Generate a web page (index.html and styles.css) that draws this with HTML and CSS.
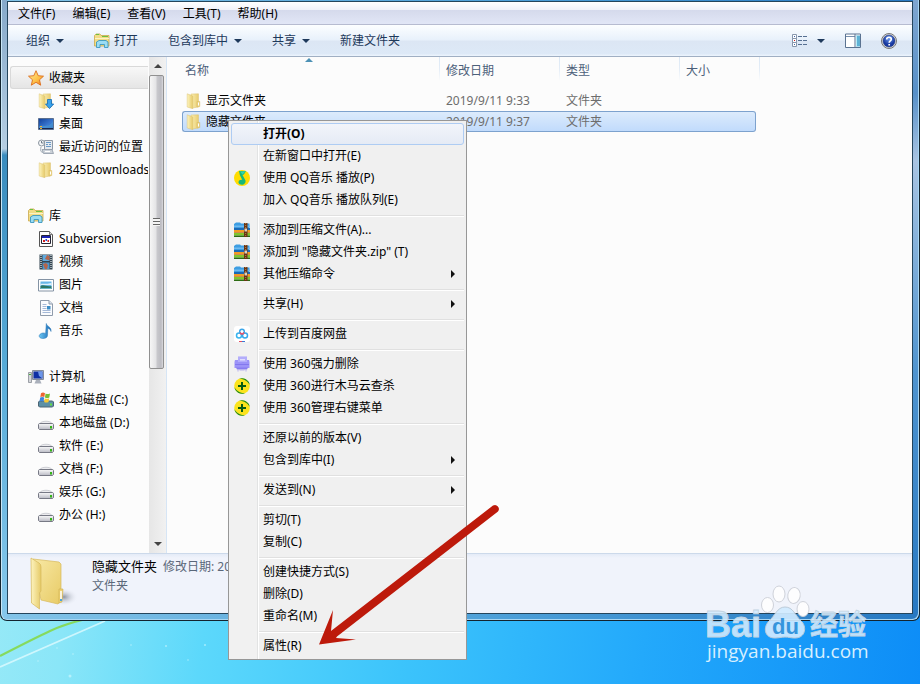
FILE: index.html
```
<!DOCTYPE html>
<html lang="zh-CN">
<head>
<meta charset="utf-8">
<title>隐藏文件夹</title>
<link rel="stylesheet" href="styles.css">
</head>
<body>
<svg class="defs" aria-hidden="true">
  <defs>
    <linearGradient id="gold" x1="0" x2="1"><stop offset="0" stop-color="#fbf0b4"/><stop offset="1" stop-color="#e8cc70"/></linearGradient>
    <linearGradient id="goldBig" x1="0" x2="1" y2="1"><stop offset="0" stop-color="#f8e9a6"/><stop offset="1" stop-color="#e8cb66"/></linearGradient>
    <linearGradient id="goldFlap" x1="0" x2="1"><stop offset="0" stop-color="#fdf4bf"/><stop offset="1" stop-color="#e6ca68"/></linearGradient>
    <linearGradient id="starFill" x1="0" y1="0" x2="1" y2="1"><stop offset="0" stop-color="#fff0a0"/><stop offset=".6" stop-color="#fdbf45"/><stop offset="1" stop-color="#f0701c"/></linearGradient>
    <linearGradient id="screen" x2="1" y2="1"><stop offset="0" stop-color="#123f98"/><stop offset=".6" stop-color="#3a78d0"/><stop offset="1" stop-color="#1c4aa0"/></linearGradient>
    <linearGradient id="note" x2="1"><stop offset="0" stop-color="#6cc6f2"/><stop offset="1" stop-color="#1667b4"/></linearGradient>
    <linearGradient id="drive" y2="1" x2="0"><stop offset="0" stop-color="#fafafa"/><stop offset="1" stop-color="#b9bac4"/></linearGradient>
    <radialGradient id="helpFill" cy=".3"><stop offset="0" stop-color="#6d9cf0"/><stop offset="1" stop-color="#1838a0"/></radialGradient>
    <radialGradient id="shadow"><stop offset="0" stop-color="#8f96a2"/><stop offset="1" stop-color="#f0f3fb" stop-opacity="0"/></radialGradient>
  </defs>
  <symbol id="folder" viewBox="0 0 16 16">
    <path d="M5 1 12.500.8 12.500 14 6 15z" fill="url(#gold)" stroke="#dcc273" stroke-width=".5"/>
    <path d="M1.200.8 6.800 3 6.800 15.700 1.200 14z" fill="url(#goldFlap)" stroke="#dcc273" stroke-width=".5"/>
    <path d="M11 8.500h2.800v5l-2.800.5z" fill="#ecd27c" stroke="#d2b356" stroke-width=".4"/>
    <path d="M12.500 9.500v3" stroke="#fff"/>
  </symbol>
  <symbol id="download" viewBox="0 0 16 16">
    <use href="#folder"/>
    <path d="M9.500 6.500h4v4.500h2.200L11.500 15.600 7.500 11h2z" fill="#39a2ec" stroke="#1269b4" stroke-width=".8"/>
  </symbol>
  <symbol id="library" viewBox="0 0 16 16">
    <path d="M.5 13V2.500L2 1h4l1 1.500h8v10.500z" fill="#f2dc86" stroke="#c9aa4c" stroke-width=".8"/>
    <path d="M2 1.500h3M8 3.500h6" stroke="#6cc23e"/>
    <path d="M1 5.500h14" stroke="#fbf3c4"/>
    <path d="M2.500 14.500V9L5 7.500h7l2 1.500v5.500h-3.500v-3h-4.500v3z" fill="#9adcf4" stroke="#3c97bf" stroke-width=".9"/>
  </symbol>
  <symbol id="star" viewBox="0 0 16 16">
    <path d="M8 .7 10.200 5.700 15.500 6.200 11.500 9.800 12.700 15.200 8 12.300 3.300 15.200 4.500 9.800.5 6.200 5.800 5.700z" fill="url(#starFill)" stroke="#dc6d1b" stroke-width=".9"/>
  </symbol>
  <symbol id="desktop" viewBox="0 0 16 16">
    <path d="M.5 2.500h15v11h-15z" fill="url(#screen)" stroke="#5a6f90"/>
    <path d="M1 10.500c4-2 9 2 14-5v7H1z" fill="#4a98d4" opacity=".7"/>
    <path d="M1 12.500h14" stroke="#17264f"/><path d="M2 10.500h2M2 12.500h2" stroke="#f2b832" stroke-width="1.200"/>
  </symbol>
  <symbol id="recent" viewBox="0 0 16 16">
    <path d="M6.500 1.500h8v9h-8z" fill="#e5e9ee" stroke="#8d98a6"/>
    <path d="M8 3.500h5M8 5.500h2M11 5.500h2M8 7.500h5" stroke="#6899c8"/>
    <path d="M4 10.500h10l1.500 4h-10z" fill="#cbd1d8" stroke="#8d98a6" stroke-width=".8"/>
    <path d="M7 12.500h5" stroke="#fff"/>
    <circle cx="3.500" cy="4" r="3" fill="#f4f6f8" stroke="#8a949e"/><path d="M3.500 2v2h2" fill="none" stroke="#50606f" stroke-width=".8"/>
    <path d="M3 8c-1 4 0 5 2 5.500" stroke="#9aa6b2" fill="none"/>
  </symbol>
  <symbol id="svn" viewBox="0 0 16 16">
    <path d="M1.500.5h10l3 3v12h-13z" fill="#fdfdfd" stroke="#555"/>
    <path d="M11.500.5v3h3" fill="#ddd" stroke="#777"/>
    <path d="M3.500 4.500h9v8h-9z" fill="#fff" stroke="#223"/><path d="M4 6h8" stroke="#1b22b5" stroke-width="2"/>
    <path d="M5 9h2v2H5z" fill="#d32020"/><path d="M7.500 8h1.500v2H7.500z" fill="#2048d8"/><path d="M9.500 9h1.500v2H9.500z" fill="#d32020"/>
  </symbol>
  <symbol id="film" viewBox="0 0 16 16">
    <path d="M1.500.5h13v15h-13z" fill="#334450"/><path d="M4.500 1h7v6h-7z" fill="#5fa9dc"/><path d="M4.500 8.500h7v6.500h-7z" fill="#4c97cc"/>
    <path d="M9 1l2.500 1v4.500L7 5zM5 10l3-1 2 2-1 4H7z" fill="#b4654b"/>
    <path d="M3 1v14M13 1v14" stroke="#e6edf0" stroke-width="1.200" stroke-dasharray="1 1"/>
  </symbol>
  <symbol id="picture" viewBox="0 0 16 16">
    <path d="M.5 2.500h15v11.500H.5z" fill="#fff" stroke="#8493a4"/><path d="M2.500 4.500h11v7.500h-11z" fill="#67b7e8"/>
    <path d="M2.500 7c3-1 6 .5 11-1v2h-11z" fill="#dff1fa"/><path d="M2.500 9c3-2 6 1 11 0v3h-11z" fill="#2c7765"/><path d="M3 11.500h10" stroke="#67b7c9"/>
  </symbol>
  <symbol id="document" viewBox="0 0 16 16">
    <path d="M2.500.5h8.500L14.500 4v11.500h-12z" fill="#fbfcfe" stroke="#8f9bab"/><path d="M11 .5V4h3.500" fill="#dbe3ee" stroke="#8f9bab"/>
    <path d="M4.500 4.500h4M4.500 6.500h4M4.500 8.500h4M4.500 10.500h8M4.500 12.500h8" stroke="#a5b9d8"/><path d="M9 6h3.500v3.500H9z" fill="#3b8dc6"/>
  </symbol>
  <symbol id="music" viewBox="0 0 16 16">
    <path d="M8.300.5c.5 3 5.500 3.500 4.700 8-.5-1.800-1.700-3-3.200-3.300L9.500 12.500c0 2-2.300 3.200-5 3-3-.2-4.300-2.500-2.500-4.200 1.600-1.500 4-1.700 5.600-.8z" fill="url(#note)" stroke="#2675b5" stroke-width=".5"/>
  </symbol>
  <symbol id="computer" viewBox="0 0 16 16">
    <path d="M.5 3.500h3v10h-3z" fill="#d4d6da" stroke="#888d96" stroke-width=".8"/><path d="M1 5.500h2" stroke="#45b035"/>
    <path d="M4.500 1.500h11v9h-11z" fill="#c2c7d0" stroke="#848c9a"/><path d="M5.500 2.500h9v7h-9z" fill="#0d2fa4"/><path d="M10 2.500h4.500v7L11 7z" fill="#6d96e8"/>
    <path d="M8 11h4l1.500 3.500h-7z" fill="#aab0bb"/>
  </symbol>
  <symbol id="drive-icon" viewBox="0 0 16 16">
    <path d="M2 8.500C3 5.500 13 5.500 14 8.500l1.500.5H.5z" fill="#ededf0" stroke="#b4b5bd" stroke-width=".6"/>
    <path d="M1.500 8.500h13l1 1v4l-1 1h-13l-1-1v-4z" fill="url(#drive)" stroke="#777985"/><path d="M12 11h2v2.500h-2z" fill="#34b516"/>
  </symbol>
  <symbol id="system" viewBox="0 0 16 16">
    <path d="M1.500 9h13l1 1v4l-1 1h-13l-1-1v-4z" fill="#5c90a6" stroke="#4d6474"/><path d="M12 11.500h2v2h-2z" fill="#62df3f"/>
    <path d="M3 1.200q2-1.500 4 0L6.300 5q-2-1-4 0z" fill="#ee6430"/><path d="M7.600 1.500q2 1 4.400 0L11.300 5.500q-2 1-4.400 0z" fill="#79bf35"/><path d="M2.200 5.500q2-1 4 0L5.500 9.500q-2-1-4 0z" fill="#3d86dd"/><path d="M6.800 6.200q2 1 4.400 0L10.500 10q-2 1-4.400 0z" fill="#f9c832"/>
  </symbol>
  <symbol id="network" viewBox="0 0 16 16"><circle cx="6" cy="6" r="6" fill="#2d68b8"/></symbol>
  <symbol id="qq" viewBox="0 0 16 16">
    <circle cx="8" cy="8" r="8" fill="#ffdc00"/><path d="M5 1 12 1.200 9.800 4.500 8.500 5 11.500 10.500C12 13 10 14.800 8 14.800S4.200 13.500 4.500 12c.3-1.800 2-2.600 3.800-2.100L5.800 5z" fill="#18b979"/><path d="M6 1.500 11.500 1.500 8.500 4.500z" fill="#37d3b0"/>
  </symbol>
  <symbol id="zip" viewBox="0 0 16 16">
    <path d="M0 2 2 .5h4l1 1h8.500V7H0z" fill="#3d9de2"/><path d="M0 3.500h16v1.500H0z" fill="#6fbaf0"/><path d="M0 6h16v2H0z" fill="#1b69b5"/>
    <path d="M0 8h16v2.500H0z" fill="#f39a24"/><path d="M0 10.500h16v.8H0z" fill="#a9550c"/><path d="M0 11h16v2.500H0z" fill="#7fc62c"/><path d="M0 13.500h16V15H0z" fill="#2d6c13"/>
    <path d="M10 1h3.500v14H10z" fill="#683515"/><path d="M10.500 6.500h2.500v3h-2.500z" fill="#ddd1c0"/><path d="M11.700 1v5M11.700 11v4" stroke="#bd824b" stroke-dasharray="1 1"/>
  </symbol>
  <symbol id="pan" viewBox="0 0 16 16">
    <rect width="16" height="16" rx="3" fill="#fff"/><g fill="none" stroke-width="1.500"><circle cx="5" cy="9.500" r="2.500" stroke="#37b4ef"/><circle cx="11" cy="9.500" r="2.500" stroke="#37a8ed"/><circle cx="8" cy="5.600" r="2.300" stroke="#3ba6e9"/><path d="M6 6.500Q8 9.500 10 6.500" stroke="#ee5266"/></g><path d="M5 15.500h3" stroke="#e64b5e"/><path d="M8 15.500h3" stroke="#397ad8"/>
  </symbol>
  <symbol id="shred" viewBox="0 0 16 16">
    <path d="M4 .5h9v5H4z" fill="#aaa3fa"/><path d="M6 2.500h5v2H6z" fill="#d9d6ff"/><path d="M1 4h14l.5 2v6h-15V6z" fill="#9c93f8"/><path d="M4 1h9v5H4z" fill="#b3adfb"/><path d="M6 3h5v1.500H6z" fill="#e0ddff"/><path d="M1 8.500h14" stroke="#8378ee"/><path d="M2 11.500h12l-1 2H3z" fill="#877cf0"/><path d="M4 14v1.500M12 14v1.500M5.500 14h5" stroke="#b7b1ee"/>
  </symbol>
  <symbol id="safe" viewBox="0 0 16 16">
    <circle cx="8" cy="8" r="7.800" fill="#fbe31d"/><path d="M5 .8A8 8 0 0 1 15.800 7L14 4.500Q11 1 5 .8zM11 15.200A8 8 0 0 1 .2 9L2 11.500Q5 15 11 15.200z" fill="#178a22"/><path d="M8 4v8M4 8h8" stroke="#075b13" stroke-width="2"/>
  </symbol>
  <symbol id="views" viewBox="0 0 16 14">
    <g fill="#fff" stroke="#8796ac"><path d="M.5.5h4v4h-4zM.5 4.500h4v4h-4zM.5 8.500h4v4h-4z"/></g>
    <path d="M6 2.500h4M11 2.500h4M6 6.500h4M11 6.500h4M6 10.500h4M11 10.500h4" stroke="#566f91"/>
    <path d="M2 2h1v1H2zM2 10h1v1H2z" fill="#3a66ad"/><path d="M2 6h1v1H2z" fill="#d31818"/>
  </symbol>
  <symbol id="preview" viewBox="0 0 16 15">
    <path d="M.5.500h15v13.500H.5z" fill="#fff" stroke="#5b7391"/><path d="M1 3h9" stroke="#7890ad"/><path d="M10 .5V14" stroke="#5b7391"/><path d="M11 2h4v11h-4z" fill="#5fb2d5"/><path d="M11.500 2v11" stroke="#b6ecf8"/>
  </symbol>
  <symbol id="help" viewBox="0 0 16 16">
    <circle cx="8" cy="8" r="7.500" fill="#e0e0e0" stroke="#777"/><circle cx="8" cy="8" r="6" fill="url(#helpFill)" stroke="#293c78" stroke-width=".6"/>
    <path d="M5.700 6.500C5.700 3.500 10.500 3.600 10.300 6.300 10.200 8 8.200 8 8.200 9.800M8.200 11v1.600" fill="none" stroke="#fff" stroke-width="1.700"/>
  </symbol>
</svg>

<div class="desktop">
  <svg class="wallpaper" viewBox="0 0 240 64" aria-hidden="true">
    <path d="M0 36Q35 18 50 11T86-1" fill="none" stroke="#86da5d" stroke-width="2.200"/>
    <path d="M0 47 105 1" stroke="#dffbff" stroke-width="1.800" opacity=".8"/>
    <g fill="#d5faff" opacity=".6"><circle cx="57" cy="28" r=".8"/><circle cx="73" cy="34" r=".8"/><circle cx="131" cy="25" r=".8"/><circle cx="166" cy="26" r="1"/><circle cx="205" cy="25" r="1"/><circle cx="70" cy="56" r="1.500"/><circle cx="38" cy="41" r=".8"/><circle cx="188" cy="40" r=".8"/></g>
  </svg>

  <main class="window">
    <div class="client">
      <nav class="menubar">
        <button>文件(F)</button><button>编辑(E)</button><button>查看(V)</button><button>工具(T)</button><button>帮助(H)</button>
      </nav>
      <div class="toolbar">
        <button>组织<i class="caret"></i></button>
        <button class="with-icon"><svg class="icon"><use href="#library"/></svg>打开</button>
        <button>包含到库中<i class="caret"></i></button>
        <button>共享<i class="caret"></i></button>
        <button>新建文件夹</button>
        <div class="tools">
          <button class="view" aria-label="视图"><svg class="icon"><use href="#views"/></svg><i class="caret"></i></button>
          <button aria-label="预览窗格"><svg class="icon"><use href="#preview"/></svg></button>
          <button aria-label="帮助"><svg class="icon"><use href="#help"/></svg></button>
        </div>
      </div>

      <div class="content">
        <aside class="sidebar">
          <div class="tree">
            <ul>
              <li class="head current"><svg class="icon"><use href="#star"/></svg>收藏夹</li>
              <li><svg class="icon"><use href="#download"/></svg>下载</li>
              <li><svg class="icon"><use href="#desktop"/></svg>桌面</li>
              <li><svg class="icon"><use href="#recent"/></svg>最近访问的位置</li>
              <li><svg class="icon"><use href="#folder"/></svg>2345Downloads</li>
            </ul>
            <ul>
              <li class="head"><svg class="icon"><use href="#library"/></svg>库</li>
              <li><svg class="icon"><use href="#svn"/></svg>Subversion</li>
              <li><svg class="icon"><use href="#film"/></svg>视频</li>
              <li><svg class="icon"><use href="#picture"/></svg>图片</li>
              <li><svg class="icon"><use href="#document"/></svg>文档</li>
              <li><svg class="icon"><use href="#music"/></svg>音乐</li>
            </ul>
            <ul>
              <li class="head"><svg class="icon"><use href="#computer"/></svg>计算机</li>
              <li><svg class="icon"><use href="#system"/></svg>本地磁盘 (C:)</li>
              <li><svg class="icon"><use href="#drive-icon"/></svg>本地磁盘 (D:)</li>
              <li><svg class="icon"><use href="#drive-icon"/></svg>软件 (E:)</li>
              <li><svg class="icon"><use href="#drive-icon"/></svg>文档 (F:)</li>
              <li><svg class="icon"><use href="#drive-icon"/></svg>娱乐 (G:)</li>
              <li><svg class="icon"><use href="#drive-icon"/></svg>办公 (H:)</li>
            </ul>
            <ul><li class="head"><svg class="icon"><use href="#network"/></svg></li></ul>
          </div>
          <div class="scrollbar">
            <button class="up" aria-label="向上滚动"></button>
            <div class="track"><div class="thumb"></div></div>
            <button class="down" aria-label="向下滚动"></button>
          </div>
        </aside>

        <section class="files">
          <table>
            <colgroup><col class="c-name"><col class="c-mid"><col class="c-mid"><col class="c-size"><col class="c-end"></colgroup>
            <thead>
              <tr><th class="sorted">名称</th><th>修改日期</th><th>类型</th><th colspan="2">大小</th></tr>
            </thead>
            <tbody>
              <tr><td><span class="file"><svg class="icon"><use href="#folder"/></svg>显示文件夹</span></td><td>2019/9/11 9:33</td><td>文件夹</td><td></td></tr>
              <tr class="selected"><td><span class="file"><svg class="icon"><use href="#folder"/></svg>隐藏文件夹</span></td><td>2019/9/11 9:37</td><td>文件夹</td><td></td></tr>
            </tbody>
          </table>
        </section>
      </div>

      <footer class="details">
        <svg class="big-folder" viewBox="0 0 48 54" aria-hidden="true">
          <ellipse cx="34" cy="40" rx="14" ry="9" fill="url(#shadow)"/>
          <path d="M3 2 29 5 31 7 31 44 28 47 11 43z" fill="url(#goldBig)" stroke="#d7b95c" stroke-width=".7"/>
          <path d="M1 1 9 6Q11 7 11 10V34L9.500 36 9.500 52 1.500 46z" fill="url(#goldFlap)" stroke="#d6b85a" stroke-width=".7"/>
          <path d="M29 32h4l-1 13-3 1z" fill="#eed274" stroke="#cfae4e" stroke-width=".6"/><path d="M31 34v9" stroke="#fff" stroke-width="1.500"/><path d="M30 42h2v2h-2z" fill="#4ba5dc"/>
        </svg>
        <div class="info">
          <div><span class="title">隐藏文件夹</span><span>修改日期: 2019/9/11 9:37</span></div>
          <div>文件夹</div>
        </div>
      </footer>
    </div>
  </main>

  <div class="context-menu" role="menu">
    <button class="hot" role="menuitem">打开(O)</button>
    <button role="menuitem">在新窗口中打开(E)</button>
    <button role="menuitem"><svg class="icon"><use href="#qq"/></svg>使用 QQ音乐 播放(P)</button>
    <button role="menuitem">加入 QQ音乐 播放队列(E)</button>
    <hr>
    <button role="menuitem"><svg class="icon"><use href="#zip"/></svg>添加到压缩文件(A)...</button>
    <button role="menuitem"><svg class="icon"><use href="#zip"/></svg>添加到 "隐藏文件夹.zip" (T)</button>
    <button class="sub" role="menuitem"><svg class="icon"><use href="#zip"/></svg>其他压缩命令</button>
    <hr>
    <button class="sub" role="menuitem">共享(H)</button>
    <hr>
    <button role="menuitem"><svg class="icon"><use href="#pan"/></svg>上传到百度网盘</button>
    <hr>
    <button role="menuitem"><svg class="icon"><use href="#shred"/></svg>使用 360强力删除</button>
    <button role="menuitem"><svg class="icon"><use href="#safe"/></svg>使用 360进行木马云查杀</button>
    <button role="menuitem"><svg class="icon"><use href="#safe"/></svg>使用 360管理右键菜单</button>
    <hr>
    <button role="menuitem">还原以前的版本(V)</button>
    <button class="sub" role="menuitem">包含到库中(I)</button>
    <hr>
    <button class="sub" role="menuitem">发送到(N)</button>
    <hr>
    <button role="menuitem">剪切(T)</button>
    <button role="menuitem">复制(C)</button>
    <hr>
    <button role="menuitem">创建快捷方式(S)</button>
    <button role="menuitem">删除(D)</button>
    <button role="menuitem">重命名(M)</button>
    <hr>
    <button role="menuitem">属性(R)</button>
  </div>

  <svg class="pointer" viewBox="0 0 180 142" aria-hidden="true">
    <path d="M0 140.500 14 106 12 127 174 1.500A4 4 0 0 1 179 7.500L18 132.500 17 134 37 135.500z" fill="#bd1a0b"/>
  </svg>

  <svg class="watermark" viewBox="0 0 170 92">
    <g fill="#fdfdfe" stroke="#cfd2da">
      <ellipse cx="62.500" cy="24" rx="6" ry="7.500"/><ellipse cx="74" cy="13" rx="6" ry="8"/>
      <ellipse cx="89" cy="14.500" rx="6.200" ry="8" transform="rotate(10 89 14.500)"/><ellipse cx="98" cy="28" rx="6" ry="7.500"/>
    </g>
    <path d="M80 26c8 0 10 8 16 14 6 5 5 17-6 17-5 0-6-1-10-1s-6 1-10 1c-11 0-12-11-6-17 6-5 8-14 16-14z" fill="#d0eaff" fill-opacity=".92" stroke="#bccbd9"/>
    <g fill="#d3ecff" fill-opacity=".9" stroke="#c4d4e2" stroke-width=".8">
      <text class="mark-latin" x="0" y="56">Bai</text><text class="mark-cjk" x="105" y="54">经验</text>
    </g>
    <text class="mark-du" x="67" y="53" fill="#3595dc">du</text>
    <text class="mark-url" x="2" y="77" fill="#d6efff">jingyan.baidu.com</text>
  </svg>
</div>
</body>
</html>
```
FILE: styles.css
```
* { box-sizing: border-box; }

body {
  margin: 0;
  font: 12px/16px "Noto Sans", "Noto Sans CJK SC", sans-serif;
  color: #000;
}

button {
  margin: 0;
  padding: 0;
  border: 0;
  background: none;
  font: inherit;
  color: inherit;
  white-space: nowrap;
}

ul { margin: 0; padding: 0; list-style: none; }

.defs { position: absolute; width: 0; height: 0; }
.icon { display: block; width: 16px; height: 16px; flex: none; }

.desktop {
  position: relative;
  display: flex;
  flex-direction: column;
  height: 100vh;
  min-height: 300px;
  overflow: hidden;
  background: linear-gradient(97deg, #a2ecf6 0%, #8ae6f8 14%, #5cd8fb 28%, #3cc4fb 48%, #23a9fb 72%, #0d8df7 100%);
}

.wallpaper { position: absolute; left: 0; bottom: 0; width: 240px; height: 64px; }

/* Window frame */
.window {
  position: relative;
  flex: 1;
  min-height: 0;
  display: flex;
  margin-bottom: 63px;
  padding: 1px 6px 6px;
  border: 1px solid #13242f;
  border-top: 0;
  border-radius: 0 0 7px 7px;
  background:
    linear-gradient(#86a9ca, #b5cee2 24%, #3a8cbe 25%, #58acd8 60%, #87c8ec) left / 6px 100% no-repeat,
    linear-gradient(#7fa6d0, #5790c8 15%, #a9c4e2 26%, #4f94cf 60%, #2678c2) right / 6px 100% no-repeat,
    linear-gradient(90deg, #83c4e8, #4c9fd8 55%, #2879c2);
  box-shadow: inset 1px 0 #c9e6f6, inset -1px -1px #a8d6f3;
}

.client {
  flex: 1;
  min-width: 0;
  display: flex;
  flex-direction: column;
  border: 1px solid #24455c;
  background: #fcfcfc;
}

.menubar {
  display: flex;
  gap: 1px;
  height: 23px;
  padding: 2px 0 0 2px;
  border-bottom: 1px solid #b6bbd0;
  background: linear-gradient(#fff 0, #eff1f9 36%, #d5daec 37%, #e1e6f6);
}
.menubar button { padding: 0 8px; }

.toolbar {
  display: flex;
  align-items: center;
  gap: 30px;
  height: 32px;
  padding: 0 15px 0 18px;
  border-bottom: 1px solid #a0afc3;
  background: linear-gradient(#fcfeff 0, #e8f1fb 48%, #dce6f4 52%, #dde9f7 92%, #edf5fd);
  color: #1e395b;
}
.toolbar button { display: flex; align-items: center; gap: 6px; }
.toolbar .with-icon { gap: 4px; }
.toolbar .view { gap: 9px; }
.tools { display: flex; align-items: center; gap: 20px; margin-left: auto; }
.caret {
  border: 4px solid transparent;
  border-top-color: #1e395b;
  border-bottom: 0;
}

/* Navigation pane */
.content { flex: 1; min-height: 0; display: flex; }
.sidebar { display: flex; width: 159px; flex: none; border-right: 1px solid #d6e5f5; }
.tree {
  flex: 1;
  min-width: 0;
  padding: 9px 1px 0 2px;
  overflow: hidden;
}
.tree ul { margin-bottom: 23px; }
.tree li {
  display: flex;
  align-items: center;
  gap: 5px;
  height: 23px;
  padding-left: 28px;
  overflow: hidden;
  white-space: nowrap;
}
.tree .head { padding-left: 18px; }
.tree .current {
  padding-left: 17px;
  border: 1px solid #d9d9d9;
  border-right: 0;
  border-radius: 3px 0 0 3px;
  background: linear-gradient(#f8f8f8, #e5e5e5);
}

.scrollbar {
  display: flex;
  flex-direction: column;
  width: 17px;
  background: linear-gradient(90deg, #e6e6e6, #f1f1f1);
}
.scrollbar button { display: grid; place-items: center; height: 18px; }
.scrollbar button::before { content: ""; border: 4px solid transparent; }
.scrollbar .up::before { border-bottom-color: #444; border-top: 0; }
.scrollbar .down::before { border-top-color: #444; border-bottom: 0; }
.track { flex: 1; }
.thumb {
  display: grid;
  place-items: center;
  width: 15px;
  height: 64%;
  border: 1px solid #909090;
  border-radius: 2px;
  background: linear-gradient(90deg, #f6f6f6, #e4e4e6 45%, #c8c8cc 55%, #bcbcc2 85%, #dadade);
}
.thumb::before {
  content: "";
  width: 7px;
  height: 8px;
  background: repeating-linear-gradient(#666 0 1px, #f4f4f4 1px 3px);
}

/* File list */
.files { flex: 1; min-width: 0; padding-left: 15px; overflow: hidden; }
table { width: 578px; border-spacing: 0; table-layout: fixed; color: #6d6d6d; }
.c-name { width: 258px; }
.c-mid { width: 120px; }
.c-size { width: 76px; }
.c-end { width: 4px; }
th, td { padding: 0 0 0 6px; text-align: left; font-weight: normal; white-space: nowrap; }
th {
  height: 33px;
  padding-bottom: 6px;
  color: #4c607a;
  background: linear-gradient(#dce8f5, #e4edf7 50%, #fcfcfc) right top / 1px 24px no-repeat;
}
th:first-child { padding-left: 3px; }
td { height: 21px; }
td:first-child { padding-left: 4px; color: #000; }
.sorted { position: relative; }
.sorted::before {
  content: "";
  position: absolute;
  top: 1px;
  left: 50%;
  margin-left: -6px;
  border: 4px solid transparent;
  border-top: 0;
  border-bottom-color: #4d91b5;
}
.file { display: flex; align-items: center; gap: 4px; }
.selected td {
  border: 1px solid #7da2ce;
  border-width: 1px 0;
  background: linear-gradient(#dcebfc, #c1dbfc);
}
.selected td:first-child { border-left-width: 1px; border-radius: 3px 0 0 3px; padding-left: 3px; }
.selected td:last-child { border-right-width: 1px; border-radius: 0 3px 3px 0; }

/* Details pane */
.details {
  display: flex;
  gap: 14px;
  height: 60px;
  padding: 3px 0 0 22px;
  border-top: 1px solid #ccd9ea;
  background: linear-gradient(#e4ebf7, #f0f3fb 4px);
  color: #5a6779;
}
.big-folder { width: 48px; height: 54px; flex: none; }
.info { line-height: 19px; white-space: nowrap; }
.title { margin-right: 6px; font-size: 13px; color: #000; }

/* Context menu */
.context-menu {
  position: absolute;
  left: 228px;
  top: 120px;
  width: 239px;
  padding: 2px;
  border: 1px solid #979797;
  background: linear-gradient(90deg, #f1f1f1 28px, #e2e3e3 28px 29px, #fff 29px 30px, #f0f0f0 30px);
}
.context-menu button {
  position: relative;
  display: flex;
  align-items: center;
  width: 100%;
  height: 22px;
  padding-left: 32px;
}
.context-menu .icon { position: absolute; left: 3px; }
.context-menu .hot {
  padding-left: 31px;
  border: 1px solid #aeccf3;
  border-radius: 3px;
  background: linear-gradient(#f2f5fa, #e5ebf5);
  font-weight: bold;
}
.context-menu .sub::after {
  content: "";
  margin: 0 9px 0 auto;
  border: 4px solid transparent;
  border-left-color: #111;
  border-right: 0;
}
.context-menu hr {
  height: 2px;
  margin: 4px 0 2px 28px;
  border: 0;
  border-top: 1px solid #e0e0e0;
  background: #fff;
}

/* Overlays */
.pointer { position: absolute; left: 319px; top: 504px; width: 180px; height: 142px; }
.watermark { position: absolute; right: 45px; bottom: 11px; width: 170px; height: 92px; }
.mark-latin { font: bold 36px "Liberation Sans", sans-serif; }
.mark-cjk { font: bold 28px "Noto Sans CJK SC", sans-serif; }
.mark-du { font: bold 22px "Liberation Sans", sans-serif; }
.mark-url { font: 19px "Open Sans", "Noto Sans", sans-serif; }
```
